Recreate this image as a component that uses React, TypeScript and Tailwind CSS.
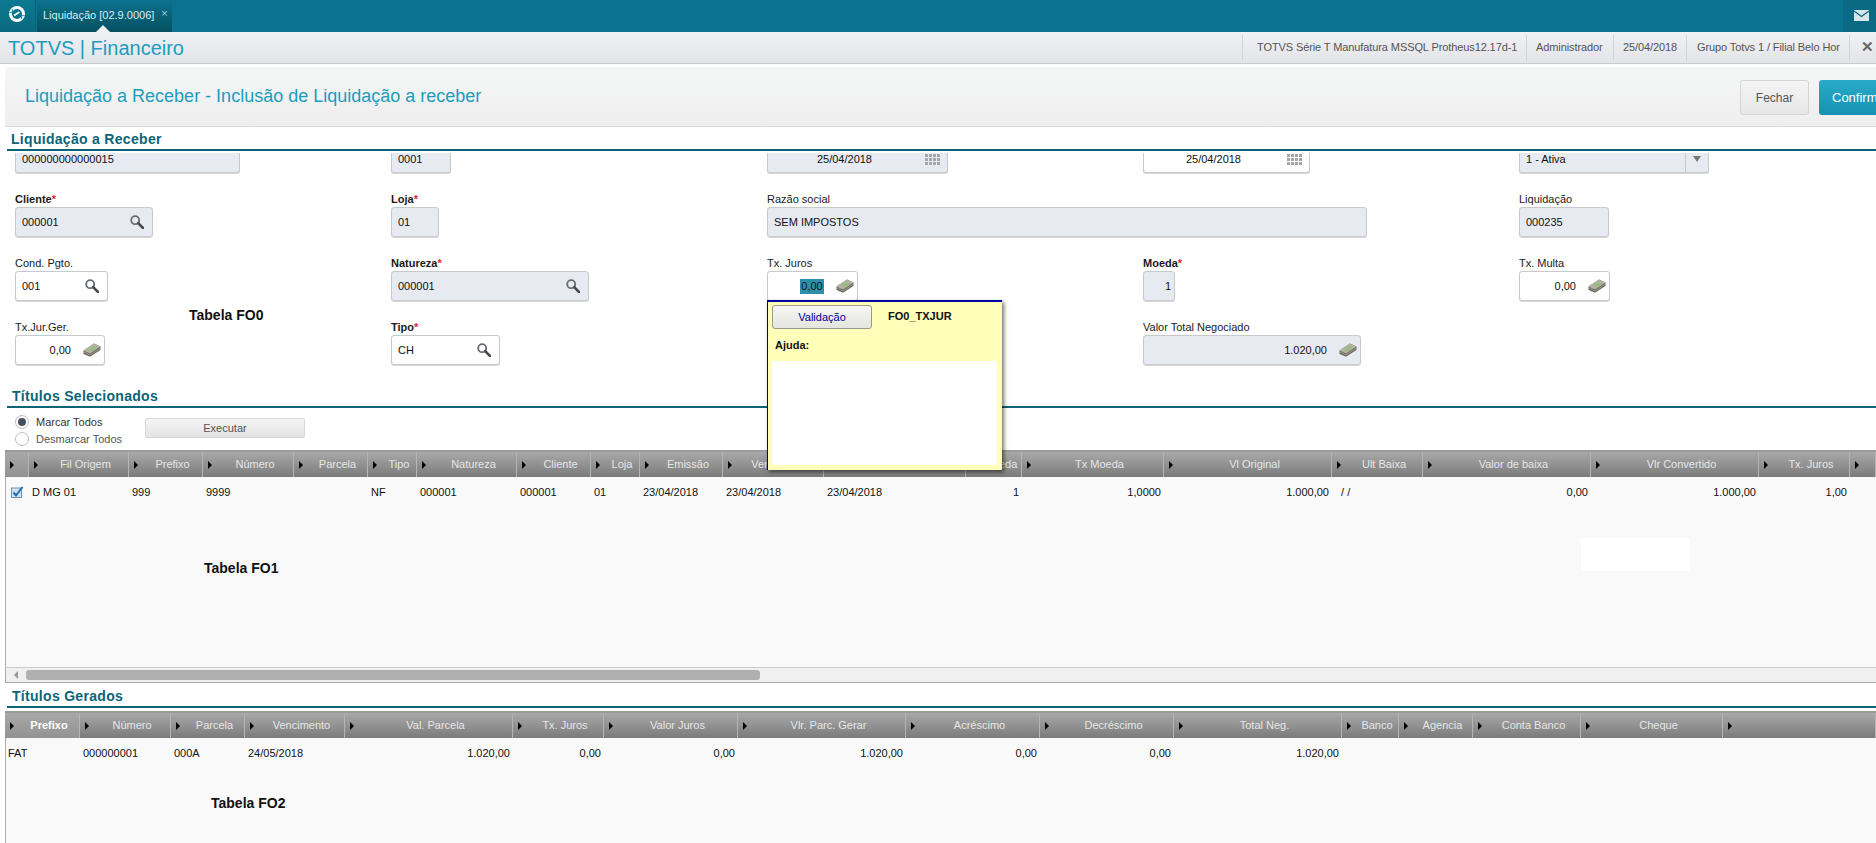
import type { ReactNode } from 'react';

type Col = { w: string; label: string; value?: string; right?: boolean; active?: boolean };

const selectedCols: Col[] = [
  { w: 'w-[24px]', label: '' },
  { w: 'w-[100px]', label: 'Fil Origem', value: 'D MG 01' },
  { w: 'w-[74px]', label: 'Prefixo', value: '999' },
  { w: 'w-[91px]', label: 'Número', value: '9999' },
  { w: 'w-[74px]', label: 'Parcela' },
  { w: 'w-[49px]', label: 'Tipo', value: 'NF' },
  { w: 'w-[100px]', label: 'Natureza', value: '000001' },
  { w: 'w-[74px]', label: 'Cliente', value: '000001' },
  { w: 'w-[49px]', label: 'Loja', value: '01' },
  { w: 'w-[83px]', label: 'Emissão', value: '23/04/2018' },
  { w: 'w-[101px]', label: 'Vencimento', value: '23/04/2018' },
  { w: 'w-[142px]', label: 'Vencto Real', value: '23/04/2018' },
  { w: 'w-[56px]', label: 'Moeda', value: '1', right: true },
  { w: 'w-[142px]', label: 'Tx Moeda', value: '1,0000', right: true },
  { w: 'w-[168px]', label: 'Vl Original', value: '1.000,00', right: true },
  { w: 'w-[91px]', label: 'Ult Baixa', value: '  / /' },
  { w: 'w-[168px]', label: 'Valor de baixa', value: '0,00', right: true },
  { w: 'w-[168px]', label: 'Vlr Convertido', value: '1.000,00', right: true },
  { w: 'w-[91px]', label: 'Tx. Juros', value: '1,00', right: true },
  { w: 'flex-1', label: '' },
];

const generatedCols: Col[] = [
  { w: 'w-[75px]', label: 'Prefixo', value: 'FAT', active: true },
  { w: 'w-[91px]', label: 'Número', value: '000000001' },
  { w: 'w-[74px]', label: 'Parcela', value: '000A' },
  { w: 'w-[100px]', label: 'Vencimento', value: '24/05/2018' },
  { w: 'w-[168px]', label: 'Val. Parcela', value: '1.020,00', right: true },
  { w: 'w-[91px]', label: 'Tx. Juros', value: '0,00', right: true },
  { w: 'w-[134px]', label: 'Valor Juros', value: '0,00', right: true },
  { w: 'w-[168px]', label: 'Vlr. Parc. Gerar', value: '1.020,00', right: true },
  { w: 'w-[134px]', label: 'Acréscimo', value: '0,00', right: true },
  { w: 'w-[134px]', label: 'Decréscimo', value: '0,00', right: true },
  { w: 'w-[168px]', label: 'Total Neg.', value: '1.020,00', right: true },
  { w: 'w-[57px]', label: 'Banco' },
  { w: 'w-[74px]', label: 'Agencia' },
  { w: 'w-[108px]', label: 'Conta Banco' },
  { w: 'w-[142px]', label: 'Cheque' },
  { w: 'flex-1', label: '' },
];

function SearchIcon() {
  return (
    <svg width="14" height="14" viewBox="0 0 14 14" fill="none" className="shrink-0">
      <circle cx="5.2" cy="5.2" r="4" stroke="#666b72" strokeWidth="1.8" />
      <path d="M8.2 8.2 L13 13" stroke="#474b50" strokeWidth="2.6" strokeLinecap="round" />
    </svg>
  );
}

function MoneyIcon() {
  return (
    <svg width="18" height="14" viewBox="0 0 18 14" className="shrink-0">
      <path d="M0.5 7.5 L11 0.5 L17.5 3.5 L17.5 7 L7 13.8 L0.5 11 Z" fill="#6f6b60" />
      <path d="M0.5 7.5 L11 0.5 L17.5 3.5 L7 10.5 Z" fill="#b5b1a3" />
      <path d="M5 7 L11 3 L13.8 4.4 L8 8.4 Z" fill="#97bd7d" />
      <path d="M1 9 L7 12 L17 5.5" fill="none" stroke="#aaa79c" strokeWidth="0.7" />
    </svg>
  );
}

function Logo() {
  return (
    <svg width="18" height="18" viewBox="0 0 18 18" fill="none">
      <circle cx="9" cy="9" r="6.5" stroke="#fff" strokeWidth="3" />
      <path d="M1.5 7.5 L5 7 L4 4" stroke="#0a7189" strokeWidth="0.9" />
      <path d="M16.5 10.5 L13 11 L14 14" stroke="#0a7189" strokeWidth="0.9" />
      <path d="M6 10.5 L11.5 7" stroke="#fff" strokeWidth="1.8" />
    </svg>
  );
}

function Field({
  label,
  required,
  value,
  w,
  white,
  right,
  icon,
}: {
  label: string;
  required?: boolean;
  value: string;
  w: string;
  white?: boolean;
  right?: boolean;
  icon?: ReactNode;
}) {
  return (
    <div className="flex flex-col">
      <div className={`h-[16px] text-[11px] leading-[16px] text-[#1a1a1a] ${required ? 'font-bold' : ''}`}>
        {label}
        {required && <span className="text-[#e8242c]">*</span>}
      </div>
      <div
        className={`flex h-[30px] items-center gap-[12px] rounded-[3px] border border-[#c6c9cd] pl-[6px] pr-[3px] text-[11px] text-[#111] shadow-[0_1px_0_#d8d8d8] ${w} ${
          white ? 'bg-white' : 'bg-[#e7eaf1]'
        }`}
      >
        <span className={`flex-1 ${right ? 'text-right' : ''}`}>{value}</span>
        {icon}
      </div>
    </div>
  );
}

function ClippedField({ value, w, white, right, children }: { value: string; w: string; white?: boolean; right?: boolean; children?: ReactNode }) {
  return (
    <div
      className={`flex h-[20px] items-start rounded-b-[3px] border border-t-0 border-[#c6c9cd] pl-[6px] text-[11px] leading-[12px] text-[#111] shadow-[0_1px_0_#d8d8d8] ${w} ${
        white ? 'bg-white' : 'bg-[#e7eaf1]'
      }`}
    >
      <span className={`flex-1 ${right ? 'text-right' : ''}`}>{value}</span>
      {children}
    </div>
  );
}

function CalendarDots({ gap }: { gap: string }) {
  return (
    <div className={`mr-[7px] mt-[1px] grid grid-cols-[repeat(4,3px)] gap-[1px] ${gap}`}>
      {Array.from({ length: 12 }).map((_, i) => (
        <span key={i} className="h-[3px] w-[3px] bg-[#a3a6aa]" />
      ))}
    </div>
  );
}

function SectionTitle({ title, h, x }: { title: string; h: string; x: string }) {
  return (
    <div className={`ml-[7px] flex items-end border-b-2 border-[#0b6478] ${h} ${x}`}>
      <span className="text-[14px] font-bold leading-[20px] tracking-[0.3px] text-[#0b6478]">{title}</span>
    </div>
  );
}

function HeaderRow({ cols, firstActive }: { cols: Col[]; firstActive?: boolean }) {
  return (
    <div className="flex h-[27px] border-t-2 border-[#9a9a9a] bg-gradient-to-b from-[#a9a9a9] to-[#7b7b7b]">
      {cols.map((c, i) => (
        <div
          key={i}
          className={`relative flex shrink-0 items-center justify-center border-r border-[#b5b5b5] pl-[14px] text-[11px] ${c.w} ${
            c.active || (firstActive && i === 0)
              ? 'bg-gradient-to-b from-[#a8a8a8] to-[#929292] font-bold text-white'
              : 'text-[#e6e6e6]'
          }`}
        >
          <span className="absolute left-[5px] top-[9px] h-0 w-0 border-y-[4px] border-l-[4px] border-y-transparent border-l-black" />
          <span className="whitespace-nowrap">{c.label}</span>
        </div>
      ))}
    </div>
  );
}

function DataRow({ cols, first }: { cols: Col[]; first?: ReactNode }) {
  return (
    <div className="flex h-[30px] items-center text-[11px] text-[#111]">
      {cols.map((c, i) => (
        <div
          key={i}
          className={`flex shrink-0 items-center whitespace-pre px-[3px] ${c.w} ${c.right ? 'justify-end' : ''}`}
        >
          {i === 0 && first ? first : c.value}
        </div>
      ))}
    </div>
  );
}

function CheckBox() {
  return (
    <svg width="13" height="12" viewBox="0 0 13 12" className="ml-[3px]">
      <rect x="0.5" y="2" width="10" height="9.5" fill="#cfe0ee" stroke="#6f94b3" />
      <path d="M2.5 6.5 L5 9.5 L11.5 1" fill="none" stroke="#1f6fb0" strokeWidth="2" />
    </svg>
  );
}

export default function App() {
  return (
    <div className="relative h-[843px] w-[1876px] overflow-hidden bg-white font-['Liberation_Sans',Arial,sans-serif]">
      {/* barra superior */}
      <div className="flex h-[32px] bg-[#0b7390]">
        <div className="flex w-[36px] items-center justify-center border-r border-[#0a6378] bg-gradient-to-b from-[#0b7a92] to-[#086a7e] pb-[4px] pr-[2px]">
          <Logo />
        </div>
        <div className="relative ml-[1px] flex w-[135px] items-start gap-[7px] bg-gradient-to-b from-[#0b7390] to-[#05505f] pl-[6px] pt-[8px] text-[11px] leading-[14px] text-[#dcecf0]">
          <span className="whitespace-nowrap">Liquidação [02.9.0006]</span>
          <span className="text-[11px] leading-[11px] text-[#a9cbd4]">×</span>
          <span className="absolute bottom-0 left-[59px] h-0 w-0 border-x-[7px] border-b-[7px] border-x-transparent border-b-[#eef0f3]" />
        </div>
        <div className="flex-1" />
        <div className="flex w-[33px] items-start bg-[#0a6a84] pl-[11px] pt-[10px]">
          <svg width="15" height="11" viewBox="0 0 15 11">
            <rect width="15" height="11" fill="#d8e6ea" />
            <path d="M0 1 L7.5 6.5 L15 1" fill="none" stroke="#0a6a84" strokeWidth="1.4" />
          </svg>
        </div>
      </div>

      {/* cabecalho do modulo */}
      <div className="flex h-[32px] items-center border-b border-[#c8cacd] bg-gradient-to-b from-[#f0f1f4] to-[#e2e4e8]">
        <div className="flex-1 pl-[8px] text-[20px] text-[#1d9dbd]">TOTVS | Financeiro</div>
        <div className="flex h-[26px] text-[11px] tracking-[-0.1px] text-[#555]">
          <div className="flex w-[284px] items-center border-l border-[#d2d4d7] pl-[14px]">TOTVS Série T Manufatura MSSQL Protheus12.17d-1</div>
          <div className="flex w-[87px] items-center border-l border-[#d2d4d7] pl-[9px]">Administrador</div>
          <div className="flex w-[73px] items-center border-l border-[#d2d4d7] pl-[9px]">25/04/2018</div>
          <div className="flex w-[163px] items-center overflow-hidden whitespace-nowrap border-l border-[#d2d4d7] pl-[10px]">Grupo Totvs 1 / Filial Belo Hor</div>
          <div className="flex w-[27px] items-center justify-center border-l border-[#d2d4d7] pl-[8px] text-[15px] font-bold text-[#666]">✕</div>
        </div>
      </div>

      {/* titulo e botoes */}
      <div className="ml-[5px] mt-[3px] flex h-[60px] items-center justify-between border-b border-[#d8d9da] bg-gradient-to-b from-[#f5f6f6] to-[#eeeeef] pl-[20px]">
        <span className="text-[18px] text-[#1d9dbd]">Liquidação a Receber - Inclusão de Liquidação a receber</span>
        <div className="flex w-[136px] shrink-0 gap-[10px] overflow-hidden pt-[2px]">
          <button className="h-[35px] w-[69px] shrink-0 rounded-[3px] border border-[#d3d4d5] bg-gradient-to-b from-[#f4f4f4] to-[#e7e7e8] text-[12px] text-[#555]">
            Fechar
          </button>
          <button className="h-[35px] w-[80px] shrink-0 whitespace-nowrap rounded-[3px] bg-gradient-to-b from-[#29a9c8] to-[#1592b4] pl-[13px] text-left text-[13px] text-white">
            Confirmar
          </button>
        </div>
      </div>

      <SectionTitle title="Liquidação a Receber" h="h-[24px]" x="pl-[4px]" />

      {/* formulario */}
      <div className="grid grid-cols-[repeat(5,376px)] gap-y-[18px] pl-[15px] pt-[2px]">
        <ClippedField value="000000000000015" w="w-[225px]" />
        <ClippedField value="0001" w="w-[60px]" />
        <ClippedField value="25/04/2018" w="w-[181px]" right>
          <CalendarDots gap="ml-[53px]" />
        </ClippedField>
        <ClippedField value="25/04/2018" w="w-[167px]" white right>
          <CalendarDots gap="ml-[46px]" />
        </ClippedField>
        <ClippedField value="1 - Ativa" w="w-[190px]">
          <div className="flex h-full w-[23px] justify-center border-l border-[#c6c9cd] pt-[3px]">
            <span className="h-0 w-0 border-x-[4px] border-t-[6px] border-x-transparent border-t-[#777]" />
          </div>
        </ClippedField>

        <Field label="Cliente" required value="000001" w="w-[138px]" icon={<span className="pr-[5px]"><SearchIcon /></span>} />
        <Field label="Loja" required value="01" w="w-[48px]" />
        <Field label="Razão social" value="SEM IMPOSTOS" w="w-[600px]" />
        <div />
        <Field label="Liquidação" value="000235" w="w-[90px]" />

        <Field label="Cond. Pgto." value="001" w="w-[93px]" white icon={<span className="pr-[5px]"><SearchIcon /></span>} />
        <Field label="Natureza" required value="000001" w="w-[198px]" icon={<span className="pr-[5px]"><SearchIcon /></span>} />
        <Field label="Tx. Juros" value="0,00" w="w-[91px]" white right icon={<MoneyIcon />} />
        <Field label="Moeda" required value="1" w="w-[32px]" right />
        <Field label="Tx. Multa" value="0,00" w="w-[91px]" white right icon={<MoneyIcon />} />

        <Field label="Tx.Jur.Ger." value="0,00" w="w-[90px]" white right icon={<MoneyIcon />} />
        <Field label="Tipo" required value="CH" w="w-[109px]" white icon={<span className="pr-[5px]"><SearchIcon /></span>} />
        <div />
        <Field label="Valor Total Negociado" value="1.020,00" w="w-[218px]" right icon={<MoneyIcon />} />
      </div>

      <SectionTitle title="Títulos Selecionados" h="h-[43px]" x="pl-[5px]" />

      {/* opcoes de marcacao */}
      <div className="flex h-[42px] items-start gap-[16px] pl-[15px] pt-[7px] text-[11px] text-[#333]">
        <div className="flex w-[114px] flex-col gap-[3px]">
          <div className="flex h-[14px] items-center gap-[7px]">
            <span className="flex h-[14px] w-[14px] items-center justify-center rounded-full border border-[#bdbdbd] bg-white">
              <span className="h-[8px] w-[8px] rounded-full bg-[#47505e]" />
            </span>
            Marcar Todos
          </div>
          <div className="flex h-[14px] items-center gap-[7px]">
            <span className="h-[14px] w-[14px] rounded-full border border-[#bdbdbd] bg-white" />
            <span className="text-[#555]">Desmarcar Todos</span>
          </div>
        </div>
        <button className="mt-[3px] h-[20px] w-[160px] rounded-[2px] border border-[#d6d6d6] bg-gradient-to-b from-[#f4f4f4] to-[#e4e4e4] text-[11px] text-[#555]">
          Executar
        </button>
      </div>

      {/* grid titulos selecionados */}
      <div className="ml-[5px]">
        <HeaderRow cols={selectedCols} firstActive />
        <div className="relative h-[190px] bg-[#f9f9f9] shadow-[inset_1px_0_0_#aaa]">
          <DataRow cols={selectedCols} first={<CheckBox />} />
          <span className="absolute left-[199px] top-[81px] text-[14px] font-bold text-[#111]">Tabela FO1</span>
          <div className="absolute left-[1576px] top-[61px] h-[33px] w-[109px] bg-white" />
        </div>
        <div className="flex h-[16px] items-center gap-[4px] border-y border-b-[#aaa] border-t-[#ccc] bg-[#f0f0f0] pl-[9px] shadow-[inset_1px_0_0_#aaa]">
          <span className="h-0 w-0 border-y-[4px] border-r-[4px] border-y-transparent border-r-[#999]" />
          <span className="ml-[4px] h-[10px] w-[734px] rounded-[3px] bg-[#b0b0b0]" />
        </div>
      </div>

      <SectionTitle title="Títulos Gerados" h="h-[25px]" x="pl-[5px]" />

      {/* grid titulos gerados */}
      <div className="ml-[5px] mt-[3px]">
        <HeaderRow cols={generatedCols} />
        <div className="h-[106px] bg-[#f9f9f9] shadow-[inset_1px_0_0_#aaa]">
          <DataRow cols={generatedCols} />
        </div>
      </div>

      {/* anotacoes sobre a tela */}
      <span className="absolute left-[189px] top-[305px] text-[14px] font-bold text-[#111]">Tabela FO0</span>
      <span className="absolute left-[211px] top-[793px] text-[14px] font-bold text-[#111]">Tabela FO2</span>

      {/* ajuda do campo */}
      <div className="absolute left-[767px] top-[300px] z-10 h-[170px] w-[235px] border-l border-t-2 border-[#0000a0] bg-[#ffffb9] pl-[4px] shadow-[2px_2px_4px_rgba(0,0,0,0.55)]">
        <div className="flex items-center gap-[16px] pt-[3px]">
          <button className="h-[24px] w-[100px] rounded-[3px] border border-[#9a9a8a] bg-gradient-to-b from-[#f6f6f4] to-[#e4e4e0] text-[11px] text-[#0000a0]">
            Validação
          </button>
          <span className="pb-[2px] text-[11px] font-bold text-[#111]">FO0_TXJUR</span>
        </div>
        <div className="pl-[3px] pt-[9px] text-[11px] font-bold leading-[14px] text-[#111]">Ajuda:</div>
        <div className="mt-[9px] h-[104px] w-[225px] bg-white" />
      </div>
      <span className="absolute left-[800px] top-[279px] z-10 h-[15px] w-[24px] bg-[#2f8fa8] text-center text-[11px] leading-[15px] text-[#111]">0,00</span>
    </div>
  );
}
